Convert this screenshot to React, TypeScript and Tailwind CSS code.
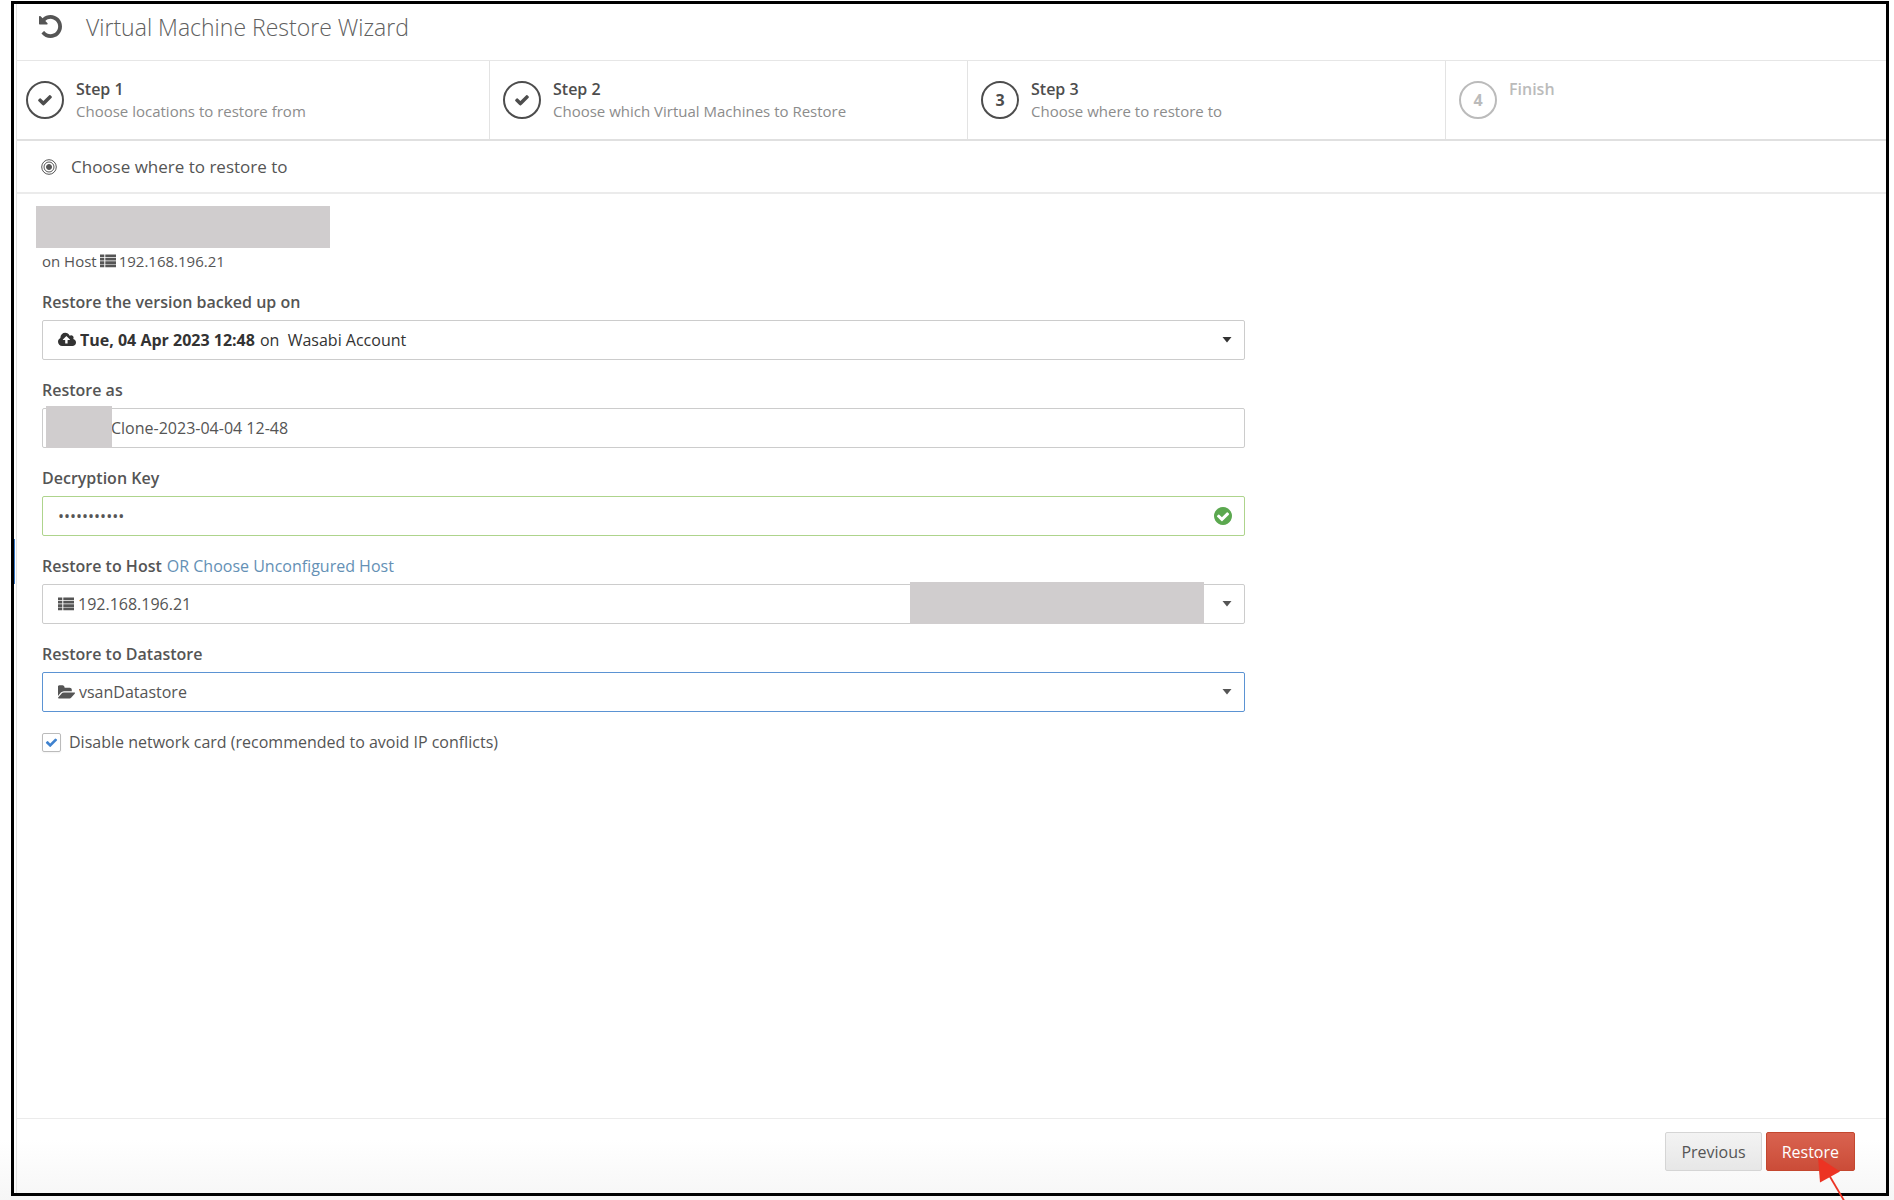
import { useState, type ReactNode } from "react";

const ICONS = {
  undo: {
    box: "0 128 1536 1536",
    d: "M1536 896q0 156-61 298t-164 245-245 164-298 61q-172 0-327-72.5t-264-204.5q-7-10-6.5-22.5t8.5-20.5l137-138q10-9 25-9 16 2 23 12 73 95 179 147t225 52q104 0 198.5-40.5t163.5-109.5 109.5-163.5 40.5-198.5-40.5-198.5-109.5-163.5-163.5-109.5-198.5-40.5q-98 0-188 35.5t-160 101.5l137 138q31 30 14 69-17 40-59 40h-448q-26 0-45-19t-19-45v-448q0-42 40-59 39-17 69 14l130 129q107-101 244.5-156.5t284.5-55.5q156 0 298 61t245 164 164 245 61 298z",
  },
  check: {
    box: "0 0 1792 1792",
    d: "M1671 566q0 40-28 68l-724 724-136 136q-28 28-68 28t-68-28l-136-136-362-362q-28-28-28-68t28-68l136-136q28-28 68-28t68 28l294 295 656-657q28-28 68-28t68 28l136 136q28 28 28 68z",
  },
  checkCircle: {
    box: "128 128 1536 1536",
    d: "M1412 734q0-28-18-46l-91-90q-19-19-45-19t-45 19l-408 407-226-226q-19-19-45-19t-45 19l-91 90q-18 18-18 46 0 27 18 45l362 362q19 19 45 19 27 0 46-19l543-543q18-18 18-45zm252 162q0 209-103 385.5t-279.5 279.5-385.5 103-385.5-103-279.5-279.5-103-385.5 103-385.5 279.5-279.5 385.5-103 385.5 103 279.5 279.5 103 385.5z",
  },
  cloud: {
    box: "-64 0 1920 1792",
    d: "M1216 864q0-14-9-23l-352-352q-9-9-23-9t-23 9l-351 351q-10 12-10 24 0 14 9 23t23 9h224v352q0 13 9.5 22.5t22.5 9.5h192q13 0 22.5-9.5t9.5-22.5v-352h224q13 0 22.5-9.5t9.5-22.5zm640 288q0 159-112.5 271.5t-271.5 112.5h-1088q-185 0-316.5-131.5t-131.5-316.5q0-130 70-240t188-165q-2-30-2-43 0-212 150-362t362-150q156 0 285.5 87t188.5 231q71-62 166-62 106 0 181 75t75 181q0 76-41 138 130 31 213.5 135.5t83.5 238.5z",
  },
  folder: {
    box: "0 0 1815 1792",
    d: "M1815 952q0 31-31 66l-336 396q-43 51-120.5 86.5t-143.5 35.5h-1088q-34 0-60.5-13t-26.5-43q0-31 31-66l336-396q43-51 120.5-86.5t143.5-35.5h1088q34 0 60.5 13t26.5 43zm-343-344v160h-832q-94 0-197 47.5t-164 119.5l-337 396-5 6q0-4-.5-12.5t-.5-12.5v-960q0-92 66-158t158-66h320q92 0 158 66t66 158v32h544q92 0 158 66t66 158z",
  },
  host: {
    box: "0 0 16 16",
    d: "M0 1.600h4.300v2.700H0zM5.300 1.600H16v2.700H5.300zM0 4.900h4.300v2.700H0zM5.300 4.900H16v2.700H5.300zM0 8.200h4.300v2.700H0zM5.300 8.200H16v2.700H5.300zM0 11.500h4.300v2.700H0zM5.300 11.500H16v2.700H5.300z",
  },
  caret: { box: "0 0 10 6", d: "M.5 0h9L5 5.500z" },
};

function Icon({ name, className }: { name: keyof typeof ICONS; className: string }) {
  return (
    <svg viewBox={ICONS[name].box} fill="currentColor" aria-hidden="true" className={`shrink-0 ${className}`}>
      <path d={ICONS[name].d} />
    </svg>
  );
}

const STEPS = [
  { title: "Step 1", text: "Choose locations to restore from", state: "done" },
  { title: "Step 2", text: "Choose which Virtual Machines to Restore", state: "done" },
  { title: "Step 3", text: "Choose where to restore to", state: "current" },
  { title: "Finish", text: "", state: "todo" },
];

function StepItem({ index }: { index: number }) {
  const step = STEPS[index];
  const todo = step.state === "todo";
  return (
    <li
      className={`flex w-[478px] items-start border-r border-[#e3e3e3] pt-[17px] pl-[13px] first:w-[473px] first:pl-[9px] last:flex-1 last:border-r-0 ${
        todo ? "text-[#bbbbbb]" : "text-[#4d4d4d]"
      }`}
    >
      <span className="mt-[3px] flex size-[38px] shrink-0 items-center justify-center rounded-full border-2 border-current text-base font-bold">
        {step.state === "done" ? <Icon name="check" className="size-4" /> : index + 1}
      </span>
      <div className="ml-3">
        <div className="text-base leading-[22px] font-semibold">{step.title}</div>
        <div className="text-[15px] leading-[22px] text-[#8c8c8c]">{step.text}</div>
      </div>
    </li>
  );
}

function Field({ id, label, extra, children }: { id: string; label: string; extra?: ReactNode; children: ReactNode }) {
  return (
    <div className="mb-[18px]">
      <div className="mb-[6px] leading-6">
        <label htmlFor={id} className="font-semibold">
          {label}
        </label>
        {extra}
      </div>
      {children}
    </div>
  );
}

const BOX = "relative flex h-10 items-center rounded-xs border bg-white pr-3 pl-[15px]";

export default function App() {
  const [name, setName] = useState("Clone-2023-04-04 12-48");
  const [key, setKey] = useState("restore-key");
  const [disableNic, setDisableNic] = useState(true);

  return (
    <div className="relative h-screen overflow-hidden bg-linear-to-b from-white from-95% to-[#f6f6f6] pt-px pr-[5px] pb-1 pl-[11px] font-['Open_Sans','Noto_Sans',sans-serif] text-base text-[#555555]">
      <div className="relative flex h-full flex-col border-3 border-black pl-[2px]">
        <span className="absolute top-[535px] left-0 h-[45px] w-px bg-[#3a7ac8]" />
        <div className="flex flex-1 flex-col border-l border-[#e3e3e3]">
          <header className="flex h-[57px] items-start border-b border-[#e6e6e6] pt-[7px] pl-[22px]">
            <Icon name="undo" className="mt-1 size-[23px] text-[#555555]" />
            <h1 className="ml-6 text-[23px] leading-8 font-light text-[#606060]">Virtual Machine Restore Wizard</h1>
          </header>

          <ol className="flex h-20 border-b-2 border-[#e0e0e0]">
            {STEPS.map((step, i) => (
              <StepItem key={step.title} index={i} />
            ))}
          </ol>

          <div className="flex h-[53px] items-center border-b-2 border-[#ebebeb] pl-6">
            <svg viewBox="0 0 16 16" fill="none" stroke="currentColor" aria-hidden="true" className="size-4">
              <circle cx="8" cy="8" r="7.300" />
              <circle cx="8" cy="8" r="5" />
              <circle cx="8" cy="8" r="2.500" fill="currentColor" />
            </svg>
            <h2 className="ml-[14px] text-[17px] leading-6">Choose where to restore to</h2>
          </div>

          <main className="flex-1 pt-3 pl-[25px]">
            <div className="w-2/3 pr-[26px]">
              <div className="-ml-[6px] h-[42px] w-[294px] bg-[#d0cdce]" />
              <div className="mt-px mb-[17px] flex h-6 items-center text-[15px]">
                on Host <Icon name="host" className="mx-[3px] size-4" /> 192.168.196.21
              </div>

              <Field id="version" label="Restore the version backed up on">
                <div className={`${BOX} border-[#cccccc] text-[#333333]`}>
                  <Icon name="cloud" className="mr-1 size-[18px]" />
                  <select id="version" className="appearance-none font-bold [field-sizing:content]">
                    <option>Tue, 04 Apr 2023 12:48</option>
                  </select>
                  <span className="ml-[5px] whitespace-pre">on  Wasabi Account</span>
                  <Icon name="caret" className="ml-auto h-[6px] w-[10px]" />
                </div>
              </Field>

              <Field id="name" label="Restore as">
                <div className={`${BOX} border-[#cccccc]`}>
                  <span className="absolute -top-[3px] left-[3px] h-[42px] w-[66px] bg-[#d0cdce]" />
                  <input
                    id="name"
                    value={name}
                    onChange={(e) => setName(e.target.value)}
                    className="w-full pl-[53px] outline-none"
                  />
                </div>
              </Field>

              <Field id="key" label="Decryption Key">
                <div className={`${BOX} border-[#aed48c]`}>
                  <input
                    id="key"
                    type="password"
                    value={key}
                    onChange={(e) => setKey(e.target.value)}
                    className="w-full outline-none"
                  />
                  <Icon name="checkCircle" className="size-[18px] text-[#5ba84f]" />
                </div>
              </Field>

              <Field
                id="host"
                label="Restore to Host"
                extra={
                  <a href="#unconfigured" className="ml-[5px] text-[#6490b5]">
                    OR Choose Unconfigured Host
                  </a>
                }
              >
                <div className={`${BOX} border-[#cccccc]`}>
                  <Icon name="host" className="mr-1 size-4" />
                  <select id="host" className="flex-1 appearance-none">
                    <option>192.168.196.21</option>
                  </select>
                  <span className="absolute -top-[3px] right-10 h-[42px] w-[294px] bg-[#d0cdce]" />
                  <Icon name="caret" className="h-[6px] w-[10px]" />
                </div>
              </Field>

              <Field id="datastore" label="Restore to Datastore">
                <div className={`${BOX} border-[#5b93d3]`}>
                  <Icon name="folder" className="mr-1 size-[17px]" />
                  <select id="datastore" className="flex-1 appearance-none outline-none">
                    <option>vsanDatastore</option>
                  </select>
                  <Icon name="caret" className="h-[6px] w-[10px]" />
                </div>
              </Field>

              <label className="flex items-center leading-6">
                <span className="relative flex size-[19px]">
                  <input
                    type="checkbox"
                    checked={disableNic}
                    onChange={(e) => setDisableNic(e.target.checked)}
                    className="size-full appearance-none rounded-xs border border-[#bbbbbb] bg-white shadow-xs"
                  />
                  {disableNic && (
                    <Icon name="check" className="pointer-events-none absolute inset-[3px] size-[13px] text-[#3f82cf]" />
                  )}
                </span>
                <span className="ml-2">Disable network card (recommended to avoid IP conflicts)</span>
              </label>
            </div>
          </main>

          <footer className="flex h-[75px] items-start justify-end gap-1 border-t border-[#ebebeb] pt-[13px] pr-[31px]">
            <button className="h-[39px] rounded-xs border border-[#d5d5d5] bg-linear-to-b from-[#f3f3f3] to-[#e7e7e7] px-[15px]">
              Previous
            </button>
            <button className="h-[39px] rounded-xs border border-[#c4472f] bg-linear-to-b from-[#d96350] to-[#cb4c38] px-[15px] text-white">
              Restore
            </button>
          </footer>
        </div>
      </div>

      <svg viewBox="0 0 30 46" aria-hidden="true" className="absolute right-[46px] bottom-0 h-[46px] w-[30px]">
        <path d="M11 21l15 25.500" stroke="#ec3323" strokeWidth="1.800" />
        <path d="M0 3l22 14.500L2 28.500z" fill="#ec3323" />
      </svg>
    </div>
  );
}
